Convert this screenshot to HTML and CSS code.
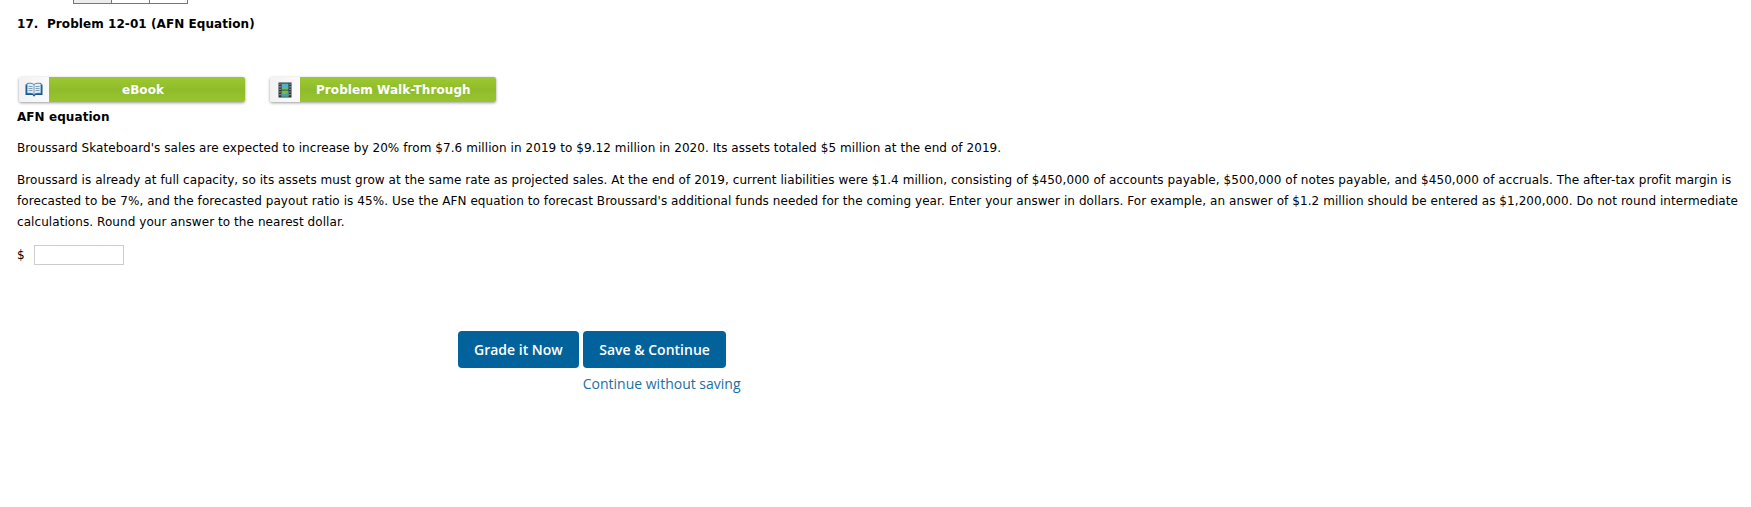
FILE: index.html
```html
<!DOCTYPE html>
<html lang="en">
<head>
    <meta charset="UTF-8">
    <title>Problem 12-01 (AFN Equation)</title>
    <link rel="stylesheet" href="styles.css">
</head>
<body>
    <div class="pager">
        <span class="pager-cell current"></span>
        <span class="pager-cell"></span>
        <span class="pager-cell"></span>
    </div>
    <h3 class="problem-title">17.&nbsp; Problem 12-01 (AFN Equation)</h3>
    <div class="tool-row">
        <a class="tool-button ebook" href="#">
            <span class="tool-icon">
                <svg width="18" height="16" viewBox="0 0 18 16">
                    <path d="M0.500 2.500h17v10.500h-7l-1.500 1.800-1.500-1.800h-7z" fill="#17598f"/>
                    <path d="M2 1.500c3-.6 5.500-.3 7 1 1.500-1.300 4-1.600 7-1v10c-3-.5-5.500-.2-7 1-1.500-1.200-4-1.500-7-1z" fill="#e3edf5" stroke="#2f6c9f" stroke-width=".8"/>
                    <path d="M9 2.500v10M3.500 4.500h4M3.500 6.500h4M3.500 8.500h4M10.500 4.500h4M10.500 6.500h4M10.500 8.500h4" stroke="#7d9fbd" stroke-width="1" fill="none"/>
                </svg>
            </span>
            <span class="tool-label">eBook</span>
        </a>
        <a class="tool-button walk" href="#">
            <span class="tool-icon">
                <svg width="14" height="16" viewBox="0 0 14 16">
                    <rect x="0.500" y="0.500" width="13" height="15" fill="#2e3236"/>
                    <rect x="3.500" y="1.500" width="7" height="6" fill="#4fb4c6"/>
                    <path d="M3.500 7.500l3-2.500 4 2.500z" fill="#74bd4c"/>
                    <rect x="3.500" y="8.500" width="7" height="6" fill="#74bd4c"/>
                    <path d="M3.500 11l3 1.500 4-2.500v4.500h-7z" fill="#3f9fc0"/>
                    <path d="M2 1.500v13M12 1.500v13" stroke="#aeb4b8" stroke-width="1.200" stroke-dasharray="1.300 1.300"/>
                </svg>
            </span>
            <span class="tool-label">Problem Walk-Through</span>
        </a>
    </div>
    <div class="question">
        <h4 class="question-title">AFN equation</h4>
        <p>Broussard Skateboard's sales are expected to increase by 20% from $7.6 million in 2019 to $9.12 million in 2020. Its assets totaled $5 million at the end of 2019.</p>
        <p>Broussard is already at full capacity, so its assets must grow at the same rate as projected sales. At the end of 2019, current liabilities were $1.4 million, consisting of $450,000 of accounts payable, $500,000 of notes payable, and $450,000 of accruals. The after-tax profit margin is forecasted to be 7%, and the forecasted payout ratio is 45%. Use the AFN equation to forecast Broussard's additional funds needed for the coming year. Enter your answer in dollars. For example, an answer of $1.2 million should be entered as $1,200,000. Do not round intermediate calculations. Round your answer to the nearest dollar.</p>
        <div class="answer-row">
            <span>$</span>
            <input type="text" class="answer-input">
        </div>
    </div>
    <div class="actions">
        <div class="action-buttons">
            <button type="button" class="action-button">Grade it Now</button>
            <div class="save-group">
                <button type="button" class="action-button save">Save &amp; Continue</button>
                <a class="continue-link" href="#">Continue without saving</a>
            </div>
        </div>
    </div>
</body>
</html>
```

FILE: styles.css
```css
body {
    font-family: "DejaVu Sans", Verdana, sans-serif;
    font-size: 12px;
    letter-spacing: 0.07px;
    color: #000;
    background-color: #fff;
    margin: 0;
    padding: 0 2px 0 17px;
    height: 507px;
    overflow: hidden;
    box-sizing: border-box;
}
.pager {
    display: flex;
    margin-left: 56px;
    width: 114px;
    height: 4px;
}
.pager-cell {
    flex: 1;
    border: 1px solid #777;
    border-top: none;
    margin-right: -1px;
}
.pager-cell.current {
    background-color: #ececec;
}
.problem-title {
    font-size: 12px;
    font-weight: bold;
    margin: 13px 0 0 0;
    line-height: 14px;
}
.tool-row {
    display: flex;
    gap: 25px;
    margin-top: 46px;
    padding-left: 2px;
}
.tool-button {
    display: flex;
    height: 25px;
    color: #fff;
    text-decoration: none;
    font-weight: bold;
    border-radius: 2px;
    box-shadow: 0 1px 3px rgba(0,0,0,0.4);
}
.tool-icon {
    display: flex;
    align-items: center;
    justify-content: center;
    width: 30px;
    background: linear-gradient(90deg, #f2f2f2, #fafafa);
    border-radius: 2px 0 0 2px;
}
.tool-label {
    line-height: 27px;
    background: linear-gradient(#9cc931, #90bc2b 50%, #98c42e);
    border-radius: 0 2px 2px 0;
}
.ebook .tool-label {
    width: 196px;
    padding-right: 8px;
    box-sizing: border-box;
    text-align: center;
}
.walk .tool-label {
    width: 196px;
    padding-left: 16px;
    box-sizing: border-box;
}
.question-title {
    font-size: 12px;
    font-weight: bold;
    margin: 0;
    padding-top: 8px;
    line-height: 14px;
}
.question p {
    margin: 11px 0 0 0;
    line-height: 21px;
}
.question .question-title + p {
    margin-top: 14px;
}
.answer-row {
    display: flex;
    align-items: center;
    gap: 9px;
    margin-top: 12px;
}
.answer-input {
    width: 90px;
    height: 20px;
    box-sizing: border-box;
    border: 1px solid #ccc;
    padding: 1px 3px;
}
.actions {
    margin-top: 66px;
    padding-left: 441px;
}
.action-buttons {
    display: flex;
    gap: 4px;
    align-items: flex-start;
}
.action-button {
    font-family: "Open Sans", sans-serif;
    font-size: 14px;
    font-weight: 600;
    letter-spacing: 0;
    color: #fff;
    background-color: #01629c;
    border: none;
    border-radius: 4px;
    height: 37px;
    padding: 0 16px;
}
.action-button.save {
    padding: 0 16.500px;
}
.continue-link {
    display: block;
    font-family: "Open Sans", sans-serif;
    font-size: 14px;
    letter-spacing: 0;
    color: #1a6fa5;
    text-decoration: none;
    margin-top: 6px;
}
```
